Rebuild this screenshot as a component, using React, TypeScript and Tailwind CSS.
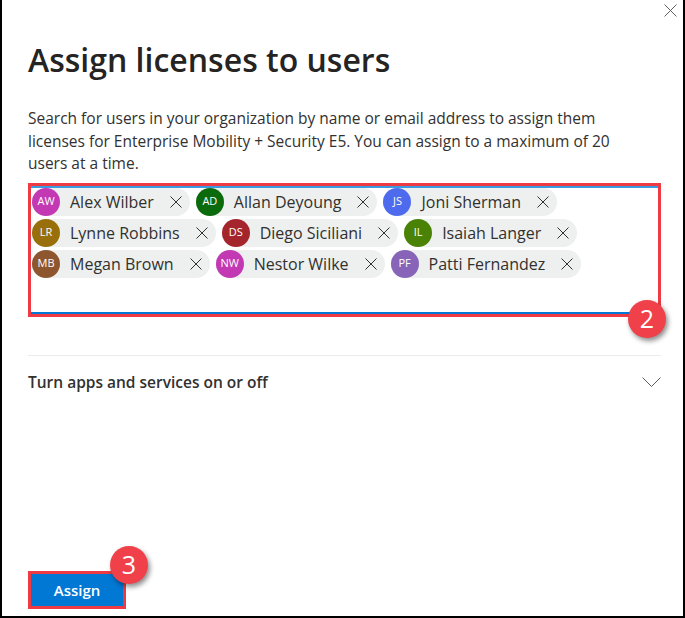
const users = [
	[
		{ i: 'AW', n: 'Alex Wilber', c: 'bg-[#c239b3]' },
		{ i: 'AD', n: 'Allan Deyoung', c: 'bg-[#0b6a0b]' },
		{ i: 'JS', n: 'Joni Sherman', c: 'bg-[#4f6bed]' },
	],
	[
		{ i: 'LR', n: 'Lynne Robbins', c: 'bg-[#986f0b]' },
		{ i: 'DS', n: 'Diego Siciliani', c: 'bg-[#a4262c]' },
		{ i: 'IL', n: 'Isaiah Langer', c: 'bg-[#498205]' },
	],
	[
		{ i: 'MB', n: 'Megan Brown', c: 'bg-[#8e562e]' },
		{ i: 'NW', n: 'Nestor Wilke', c: 'bg-[#c239b3]' },
		{ i: 'PF', n: 'Patti Fernandez', c: 'bg-[#8764b8]' },
	],
]

function Cross({ size, className }: { size: number; className?: string }) {
	return (
		<svg width={size} height={size} viewBox="0 0 12 12" className={className}>
			<path d="M0.5 0.5L11.5 11.5M11.5 0.5L0.5 11.5" stroke="currentColor" strokeWidth={12 / size} fill="none" />
		</svg>
	)
}

function Chip({ i, n, c }: { i: string; n: string; c: string }) {
	return (
		<div className="flex h-[28px] items-center rounded-full bg-[#edf0ee] pr-[8px]">
			<div
				className={`flex h-[28px] w-[28px] items-center justify-center rounded-full text-[11px] text-white ${c}`}
			>
				{i}
			</div>
			<span className="ml-[10px] mr-[16px] text-[16px] text-[#323130]">{n}</span>
			<Cross size={12} className="text-[#323130]" />
		</div>
	)
}

function Badge({ n }: { n: string }) {
	return (
		<div className="flex h-[38px] w-[38px] items-center justify-center rounded-full bg-[#f04049] text-[25px] text-white shadow-[2px_3px_5px_rgba(0,0,0,0.45)]">
			{n}
		</div>
	)
}

export default function App() {
	return (
		<div
			className="flex h-[618px] w-[685px] flex-col border-x-2 border-b-2 border-black bg-white pl-[26px] pr-[22px] text-[#323130]"
			style={{ fontFamily: '"Open Sans", "Noto Sans", sans-serif' }}
		>
			<div className="-mr-[16px] flex justify-end pt-[4px]">
				<Cross size={13} className="text-[#605e5c]" />
			</div>
			<h1 className="mt-[23px] text-[32px] font-semibold leading-[40px] text-[#252423]">
				Assign licenses to users
			</h1>
			<p className="mt-[27px] max-w-[605px] text-[15.5px] leading-[22.5px]">
				Search for users in your organization by name or email address to assign them licenses
				for Enterprise Mobility + Security E5. You can assign to a maximum of 20 users at a
				time.
			</p>
			<div className="relative mt-[8px] h-[134px] border-[3px] border-[#ee3a42]">
				<div className="h-full border-y-2 border-[#0078d4] border-t-[#3b9be0]">
					<div className="flex flex-col gap-[3px] pl-[1px]">
						{users.map((row, r) => (
							<div key={r} className="flex gap-[6px]">
								{row.map(u => (
									<Chip key={u.i} {...u} />
								))}
							</div>
						))}
					</div>
				</div>
				<div className="absolute -bottom-[24px] -right-[8px]">
					<Badge n="2" />
				</div>
			</div>
			<div className="mt-[38px] border-t border-[#edebe9]" />
			<div className="flex h-[54px] items-center justify-between">
				<span className="text-[15.5px] font-semibold text-[#323130]">
					Turn apps and services on or off
				</span>
				<svg width="19" height="11" viewBox="0 0 19 11" className="text-[#605e5c]">
					<path d="M0.5 0.5L9.5 9.5L18.5 0.5" stroke="currentColor" strokeWidth="1" fill="none" />
				</svg>
			</div>
			<div className="flex-1" />
			<div className="relative mb-[7px] w-fit">
				<button className="flex h-[38px] w-[98px] items-center justify-center border-[3px] border-[#ee3a42] bg-[#0078d4] text-[15px] font-semibold text-white">
					Assign
				</button>
				<div className="absolute -right-[22px] -top-[25px]">
					<Badge n="3" />
				</div>
			</div>
		</div>
	)
}
